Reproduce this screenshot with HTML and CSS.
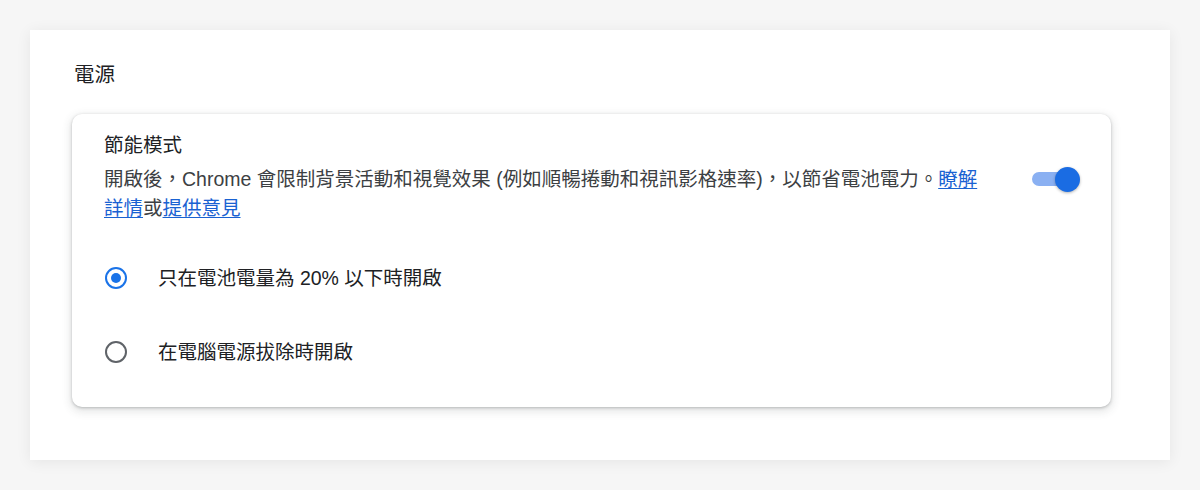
FILE: index.html
```html
<!DOCTYPE html>
<html lang="zh-Hant">
<head>
<meta charset="utf-8">
<title>電源</title>
<link rel="stylesheet" href="styles.css">
</head>
<body>
<section class="panel">
  <h2 class="section-title">電源</h2>
  <div class="card">
    <div class="setting">
      <div class="setting-text">
        <div class="setting-label">節能模式</div>
        <div class="setting-desc">開啟後，Chrome 會限制背景活動和視覺效果 (例如順暢捲動和視訊影格速率)，以節省電池電力。<a href="#" class="link">瞭解詳情</a>或<a href="#" class="link">提供意見</a></div>
      </div>
      <div class="toggle" role="switch" aria-checked="true">
        <span class="toggle-track"></span>
        <span class="toggle-thumb"></span>
      </div>
    </div>
    <div class="radio-list">
      <div class="radio-row">
        <span class="radio checked"></span>
        <span class="radio-label">只在電池電量為 20% 以下時開啟</span>
      </div>
      <div class="radio-row">
        <span class="radio"></span>
        <span class="radio-label">在電腦電源拔除時開啟</span>
      </div>
    </div>
  </div>
</section>
</body>
</html>
```
FILE: styles.css
```css
html, body {
  margin: 0;
  padding: 0;
}
body {
  background: #f6f6f6;
  font-family: "Liberation Sans", "Noto Sans CJK TC", sans-serif;
  color: #202124;
  padding: 30px 30px 30px 30px;
  height: 490px;
  box-sizing: border-box;
}
.panel {
  width: 1140px;
  height: 430px;
  box-sizing: border-box;
  background: #fff;
  box-shadow: 0 2px 14px rgba(0, 0, 0, 0.07);
  padding: 30px 59px 52px 42px;
}
.section-title {
  margin: 0 0 0 2px;
  font-size: 20.5px;
  font-weight: 400;
  line-height: 30px;
  color: #202124;
}
.card {
  margin-top: 24px;
  border-radius: 10px;
  background: #fff;
  box-shadow: 0 1px 3px rgba(60, 64, 67, 0.3), 0 3px 8px 2px rgba(60, 64, 67, 0.12);
  padding: 17px 31px 18px 32px;
}
.setting {
  display: flex;
  align-items: flex-start;
}
.setting-text {
  flex: 1;
  margin-right: 45px;
  font-size: 19.5px;
  line-height: 29px;
}
.setting-label {
  margin-bottom: 5px;
}
.setting-desc {
  color: #3c4043;
}
.link {
  color: #1a62d2;
  text-decoration: underline;
  text-underline-offset: 2px;
}
.toggle {
  position: relative;
  width: 48px;
  height: 24px;
  margin-top: 36px;
  flex: none;
}
.toggle-track {
  position: absolute;
  left: 0;
  top: 5px;
  width: 44px;
  height: 14px;
  border-radius: 7px;
  background: #8ab0f2;
}
.toggle-thumb {
  position: absolute;
  right: 0;
  top: 0;
  width: 25px;
  height: 25px;
  border-radius: 50%;
  background: #1a6ce3;
  box-shadow: 0 1px 3px rgba(0, 0, 0, 0.3);
}
.radio-list {
  padding-top: 18px;
}
.radio-row {
  display: flex;
  align-items: center;
  height: 74px;
}
.radio {
  width: 22px;
  height: 22px;
  box-sizing: border-box;
  border: 2.5px solid #5f6368;
  border-radius: 50%;
  margin-left: 1px;
  margin-right: 31px;
  position: relative;
  flex: none;
}
.radio.checked {
  border-color: #1a73e8;
}
.radio.checked::after {
  content: "";
  position: absolute;
  left: 3.5px;
  top: 3.5px;
  width: 10px;
  height: 10px;
  border-radius: 50%;
  background: #1a73e8;
}
.radio-label {
  font-size: 19.5px;
  line-height: 29px;
  color: #202124;
}
```
